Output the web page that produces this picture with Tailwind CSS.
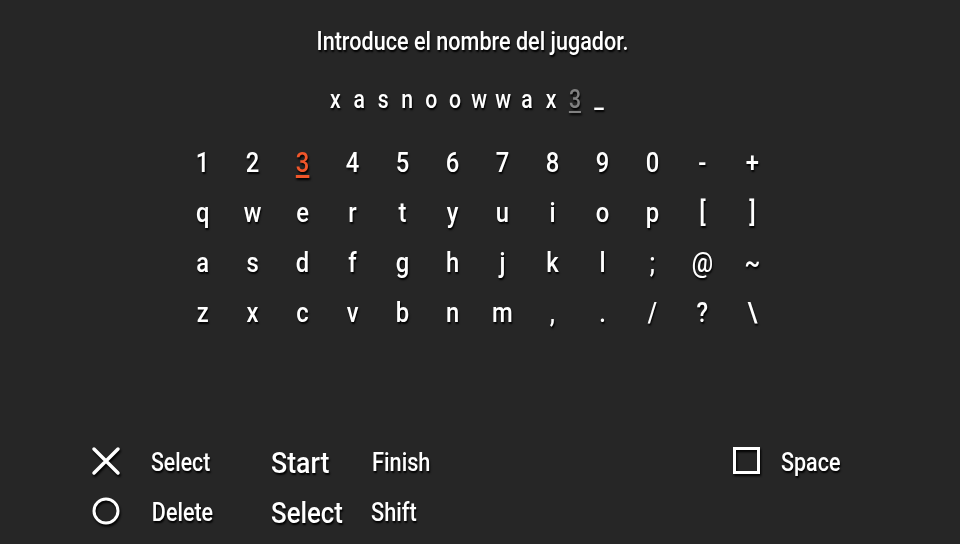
<!DOCTYPE html>
<html><head><meta charset="utf-8"><script src="https://cdn.jsdelivr.net/npm/@tailwindcss/browser@4"></script></head>
<body class="m-0">
<div class="w-[960px] h-[544px] bg-[#262626] text-white font-['Roboto',sans-serif] overflow-hidden flex flex-col [text-shadow:1px_2px_2px_#000]">
  <div class="h-[29px]"></div>
  <div class="h-[26px] leading-[26px] text-[25px] font-medium text-center scale-x-[0.864] ml-[-15px]">Introduce el nombre del jugador.</div>
  <div class="h-[32px]"></div>
  <div class="flex justify-center h-[26px] leading-[26px] text-[25px] font-medium ml-[-25px]">
    <div class="grid grid-cols-[repeat(12,28.2px)] text-center scale-x-[0.85] shrink-0">
      <span>x</span><span>a</span><span>s</span><span>n</span><span>o</span><span>o</span><span>w</span><span>w</span><span>a</span><span>x</span><span class="text-[#808080] underline decoration-2 underline-offset-3">3</span><span>_</span>
    </div>
  </div>
  <div class="h-[25px]"></div>
  <div class="grid grid-cols-[repeat(12,58.8px)] auto-rows-[50px] justify-center text-[28px] font-medium leading-[50px] text-center ml-[-5px] h-[200px] scale-x-[0.85]">
    <span>1</span><span>2</span><span class="text-[#f0562a] underline decoration-3 underline-offset-3">3</span><span>4</span><span>5</span><span>6</span><span>7</span><span>8</span><span>9</span><span>0</span><span>-</span><span>+</span>
    <span>q</span><span>w</span><span>e</span><span>r</span><span>t</span><span>y</span><span>u</span><span>i</span><span>o</span><span>p</span><span>[</span><span>]</span>
    <span>a</span><span>s</span><span>d</span><span>f</span><span>g</span><span>h</span><span>j</span><span>k</span><span>l</span><span>;</span><span>@</span><span>~</span>
    <span>z</span><span>x</span><span>c</span><span>v</span><span>b</span><span>n</span><span>m</span><span>,</span><span>.</span><span>/</span><span>?</span><span>\</span>
  </div>
  <div class="h-[100px]"></div>
  <div class="flex pl-[91px] text-[25px] font-medium">
    <div class="grid grid-cols-[60px_120px_101px_100px] auto-rows-[50px] items-center leading-[50px]">
      <svg width="30" height="30" viewBox="0 0 30 30" fill="none" stroke="#fff" stroke-width="3.5" stroke-linecap="round" class="mb-1 drop-shadow-[1px_2px_1px_#000]"><path d="M3 3 L27 27 M27 3 L3 27"/></svg>
      <span class="origin-left scale-x-[0.85]">Select</span><span class="text-[29px] origin-left scale-x-[0.92]">Start</span><span class="origin-left scale-x-[0.87]">Finish</span>
      <svg width="30" height="30" viewBox="0 0 30 30" fill="none" stroke="#fff" stroke-width="3" class="mb-1 drop-shadow-[1px_2px_1px_#000]"><circle cx="15" cy="15" r="12"/></svg>
      <span class="origin-left scale-x-[0.86] pl-px">Delete</span><span class="text-[29px] origin-left scale-x-[0.89]">Select</span><span class="origin-left scale-x-[0.87] -ml-px">Shift</span>
    </div>
    <div class="ml-[260px] flex h-[50px] items-center">
      <svg width="30" height="30" viewBox="0 0 30 30" fill="none" stroke="#fff" stroke-width="3" class="mb-1 w-[30px] drop-shadow-[1px_2px_1px_#000]"><rect x="2.5" y="2.5" width="24" height="24"/></svg>
      <span class="ml-[19px] origin-left scale-x-[0.86]">Space</span>
    </div>
  </div>
</div>
</body></html>
